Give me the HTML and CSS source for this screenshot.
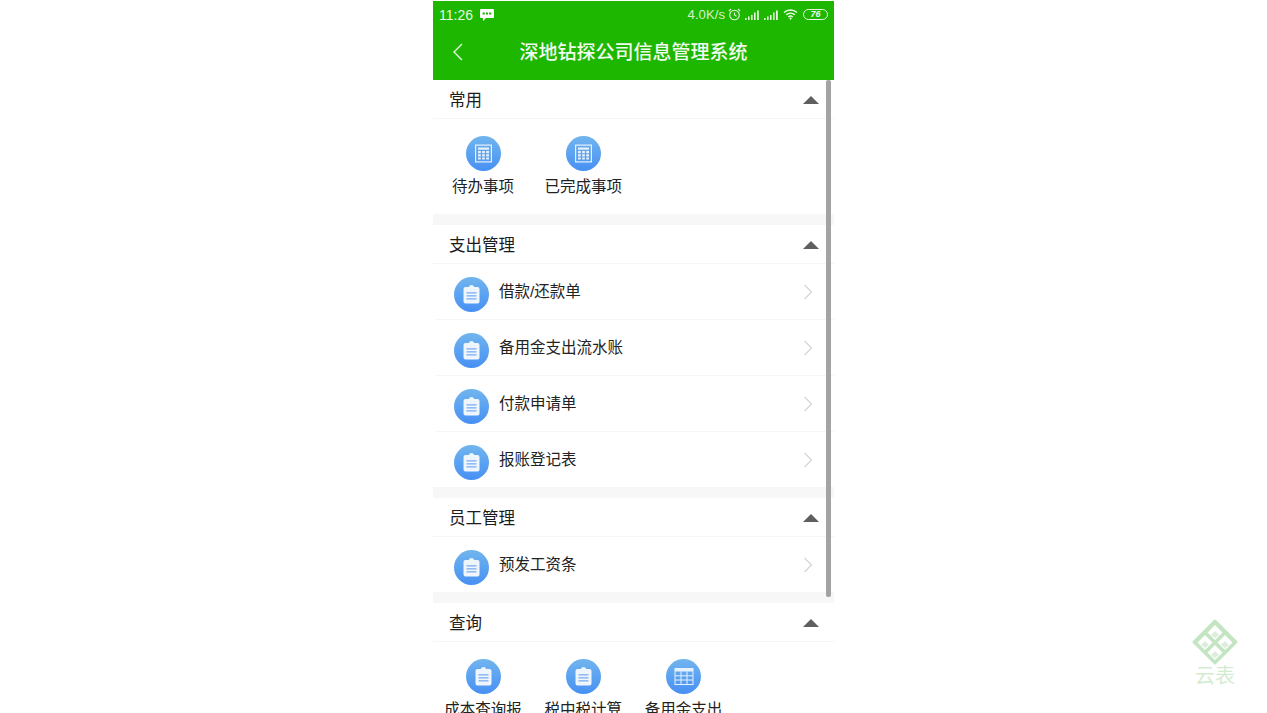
FILE: index.html
```html
<!DOCTYPE html>
<html lang="zh-CN">
<head>
    <meta charset="UTF-8">
    <meta name="viewport" content="width=device-width, initial-scale=1.0">
    <title>深地钻探公司信息管理系统</title>
    <link rel="stylesheet" href="styles.css">
</head>
<body>
    <svg class="defs" width="0" height="0">
        <defs>
            <linearGradient id="blue" x1="0" y1="0" x2="0" y2="1">
                <stop offset="0" stop-color="#71b5ee"/>
                <stop offset="1" stop-color="#4790f3"/>
            </linearGradient>
            <symbol id="ico-calc" viewBox="0 0 35 35">
                <circle cx="17.5" cy="17.5" r="17.5" fill="url(#blue)"/>
                <rect x="9.6" y="9.1" width="15.8" height="16.8" fill="none" stroke="#e6f1fc" stroke-width="1.2"/>
                <rect x="12" y="11.5" width="11" height="2.2" fill="#e6f1fc"/>
                <path d="M12 15h2.8v2.2H12zM16.1 15h2.8v2.2h-2.8zM20.2 15H23v2.2h-2.8zM12 18.2h2.8v2.2H12zM16.1 18.2h2.8v2.2h-2.8zM20.2 18.2H23v2.2h-2.8zM12 21.4h2.8v2.2H12zM16.1 21.4h2.8v2.2h-2.8zM20.2 21.4H23v2.2h-2.8z" fill="#e6f1fc"/>
            </symbol>
            <symbol id="ico-clip" viewBox="0 0 35 35">
                <circle cx="17.5" cy="17.5" r="17.5" fill="url(#blue)"/>
                <path d="M11.5 10h3.2a3 3 0 0 1 5.6 0h3.2a2 2 0 0 1 2 2v12.5a2 2 0 0 1-2 2h-12a2 2 0 0 1-2-2V12a2 2 0 0 1 2-2z" fill="#eef5fd"/>
                <rect x="12.5" y="15.2" width="10" height="1.3" fill="#7db0ef"/>
                <rect x="12.5" y="18.2" width="10" height="1.3" fill="#7db0ef"/>
                <rect x="12.5" y="21.2" width="10" height="1.3" fill="#7db0ef"/>
            </symbol>
            <symbol id="ico-table" viewBox="0 0 35 35">
                <circle cx="17.5" cy="17.5" r="17.5" fill="url(#blue)"/>
                <rect x="9" y="9.5" width="18" height="16" fill="none" stroke="#e6f1fc" stroke-width="1"/>
                <rect x="9" y="9.5" width="18" height="3" fill="#e6f1fc"/>
                <path d="M15 12.5v13M21 12.5v13M9 16.8h18M9 21h18" stroke="#e6f1fc" stroke-width="1" fill="none"/>
            </symbol>
            <symbol id="ico-more" viewBox="0 0 10 16">
                <path d="M1.5 1l7 7-7 7" fill="none" stroke="#d4d4d4" stroke-width="1.2"/>
            </symbol>
            <symbol id="ico-signal" viewBox="0 0 15 10">
                <path d="M0 8h1.6v2H0zM3 6.6h1.6V10H3zM6 5h1.6v5H6zM9 2.6h1.6V10H9zM12 .4h1.8V10H12z" fill="#e3f5de"/>
            </symbol>
        </defs>
    </svg>

    <div class="phone">
        <header class="appbar">
            <div class="statusbar">
                <div class="status-left">
                    <span>11:26</span>
                    <svg class="msg-icon" width="14" height="12" viewBox="0 0 14 12">
                        <path d="M1 0h12a1 1 0 0 1 1 1v7a1 1 0 0 1-1 1H6l-3 3V9H1a1 1 0 0 1-1-1V1a1 1 0 0 1 1-1z" fill="#fff"/>
                        <path d="M2.6 3.4h2.2v2.2H2.6zM5.9 3.4h2.2v2.2H5.9zM9.2 3.4h2.2v2.2H9.2z" fill="#1db700"/>
                    </svg>
                </div>
                <div class="status-right">
                    <span class="speed">4.0K/s</span>
                    <svg width="13" height="13" viewBox="0 0 13 13">
                        <circle cx="6.5" cy="7" r="4.8" fill="none" stroke="#e3f5de" stroke-width="1.1"/>
                        <path d="M6.5 4.4V7l2 1.3M.8 3.2L3 1M12.2 3.2L10 1" fill="none" stroke="#e3f5de" stroke-width="1.1"/>
                    </svg>
                    <svg width="15" height="10"><use href="#ico-signal"/></svg>
                    <svg width="15" height="10"><use href="#ico-signal"/></svg>
                    <svg width="15" height="11" viewBox="0 0 15 11">
                        <path d="M1 3.5a9.5 9.5 0 0 1 13 0M3.2 5.8a6.3 6.3 0 0 1 8.6 0M5.3 8a3.2 3.2 0 0 1 4.4 0" fill="none" stroke="#f0faed" stroke-width="1.4"/>
                        <circle cx="7.5" cy="9.6" r="1.1" fill="#f0faed"/>
                    </svg>
                    <span class="battery"><span class="battery-num">76</span></span>
                </div>
            </div>
            <div class="titlebar">
                <svg class="back" width="11" height="18" viewBox="0 0 11 18">
                    <path d="M10 1L2 9l8 8" fill="none" stroke="#e8f7e4" stroke-width="1.4"/>
                </svg>
                <h1>深地钻探公司信息管理系统</h1>
            </div>
        </header>

        <main class="content">
            <section class="group">
                <div class="group-head">
                    <h2>常用</h2>
                    <span class="arrow-up"></span>
                </div>
                <div class="grid grid-short">
                    <div class="grid-item">
                        <svg class="icon"><use href="#ico-calc"/></svg>
                        <span>待办事项</span>
                    </div>
                    <div class="grid-item">
                        <svg class="icon"><use href="#ico-calc"/></svg>
                        <span>已完成事项</span>
                    </div>
                </div>
            </section>

            <section class="group">
                <div class="group-head">
                    <h2>支出管理</h2>
                    <span class="arrow-up"></span>
                </div>
                <div class="row">
                    <svg class="icon"><use href="#ico-clip"/></svg>
                    <span class="row-text">借款/还款单</span>
                    <svg class="more"><use href="#ico-more"/></svg>
                </div>
                <div class="row">
                    <svg class="icon"><use href="#ico-clip"/></svg>
                    <span class="row-text">备用金支出流水账</span>
                    <svg class="more"><use href="#ico-more"/></svg>
                </div>
                <div class="row">
                    <svg class="icon"><use href="#ico-clip"/></svg>
                    <span class="row-text">付款申请单</span>
                    <svg class="more"><use href="#ico-more"/></svg>
                </div>
                <div class="row row-last">
                    <svg class="icon"><use href="#ico-clip"/></svg>
                    <span class="row-text">报账登记表</span>
                    <svg class="more"><use href="#ico-more"/></svg>
                </div>
            </section>

            <section class="group">
                <div class="group-head">
                    <h2>员工管理</h2>
                    <span class="arrow-up"></span>
                </div>
                <div class="row row-last">
                    <svg class="icon"><use href="#ico-clip"/></svg>
                    <span class="row-text">预发工资条</span>
                    <svg class="more"><use href="#ico-more"/></svg>
                </div>
            </section>

            <section class="group">
                <div class="group-head">
                    <h2>查询</h2>
                    <span class="arrow-up"></span>
                </div>
                <div class="grid">
                    <div class="grid-item">
                        <svg class="icon"><use href="#ico-clip"/></svg>
                        <span>成本查询报</span>
                    </div>
                    <div class="grid-item">
                        <svg class="icon"><use href="#ico-clip"/></svg>
                        <span>税中税计算</span>
                    </div>
                    <div class="grid-item">
                        <svg class="icon"><use href="#ico-table"/></svg>
                        <span>备用金支出</span>
                    </div>
                </div>
            </section>
        </main>

        <div class="scrollbar"></div>
    </div>

    <div class="watermark">
        <svg width="46" height="46" viewBox="0 0 46 46">
            <path d="M23 2l21 21-21 21L2 23z" fill="#c4e5c2" stroke="#c4e5c2" stroke-width="3" stroke-linejoin="round"/>
            <path d="M23 6l7.5 7.5L23 21l-7.5-7.5zM13 16l7.5 7.5L13 31l-7.5-7.5zM33 16l7.5 7.5L33 31l-7.5-7.5zM23 26l7.5 7.5L23 41l-7.5-7.5z" fill="#fff"/>
            <path d="M23 12l4 4-4 3-4-3zM13 22l4 4-4 3-4-3zM33 22l4 4-4 3-4-3zM23 32l4 4-4 3-4-3z" fill="#dceedb"/>
        </svg>
        <span>云表</span>
    </div>
</body>
</html>
```

FILE: styles.css
```css
html, body {
    height: 100%;
}
body {
    margin: 0;
    background-color: #fff;
    font-family: "Liberation Sans", "Noto Sans CJK SC", sans-serif;
    overflow: hidden;
}
.defs {
    position: absolute;
}
.phone {
    position: relative;
    width: 401px;
    height: 713px;
    margin: 0 auto;
    overflow: hidden;
    background-color: #fff;
}

/* top green bar */
.appbar {
    height: 79px;
    margin-top: 1px;
    background-color: #1db700;
    color: #fff;
}
.statusbar {
    display: flex;
    justify-content: space-between;
    align-items: center;
    height: 27px;
    padding: 0 6px;
    font-size: 14px;
}
.status-left {
    display: flex;
    align-items: center;
    gap: 7px;
    color: #e9f8e5;
}
.msg-icon {
    margin-top: 1px;
}
.status-right {
    display: flex;
    align-items: center;
    gap: 4px;
    color: #d6f0d0;
    font-size: 13.2px;
}
.speed {
    margin-right: -1px;
}
.battery {
    display: flex;
    align-items: center;
    justify-content: center;
    width: 23px;
    height: 9px;
    margin-left: 1px;
    border: 1px solid #e6f7e2;
    border-radius: 6px;
}
.battery-num {
    font-size: 9px;
    font-style: italic;
    font-weight: bold;
    line-height: 9px;
    color: #f0faed;
}
.titlebar {
    position: relative;
    display: flex;
    align-items: center;
    justify-content: center;
    height: 48px;
    padding-bottom: 4px;
    box-sizing: border-box;
}
.back {
    position: absolute;
    left: 19px;
    top: 15px;
}
.titlebar h1 {
    margin: 0;
    font-size: 19px;
    font-weight: 500;
    color: #f2fbf0;
}

/* list */
.group {
    border-bottom: 11px solid #f7f7f7;
    background-color: #fff;
}
.group-head {
    display: flex;
    align-items: center;
    justify-content: space-between;
    height: 38px;
    padding: 0 15px 0 16px;
    border-bottom: 1px solid #f5f5f5;
}
.group-head h2 {
    margin: 0;
    font-size: 16.5px;
    font-weight: 400;
    color: #1c1c1c;
}
.arrow-up {
    width: 0;
    height: 0;
    margin-top: 2px;
    border-left: 8px solid transparent;
    border-right: 8px solid transparent;
    border-bottom: 8px solid #5f5f5f;
}
.row {
    display: flex;
    align-items: center;
    height: 55px;
    margin-left: 3px;
    padding: 0 21px 0 18px;
    border-bottom: 1px solid #f6f6f6;
}
.row-last {
    border-bottom: none;
}
.row .icon {
    margin-top: 6px;
}
.row-text {
    flex: 1;
    margin-left: 10px;
    margin-bottom: 3px;
    font-size: 15.5px;
    color: #222;
}
.icon {
    display: block;
    flex: none;
    width: 35px;
    height: 35px;
}
.more {
    flex: none;
    width: 10px;
    height: 16px;
}
.grid {
    display: grid;
    grid-template-columns: repeat(4, 1fr);
    padding-top: 17px;
}
.grid-short {
    height: 78px;
}
.grid-item {
    display: flex;
    flex-direction: column;
    align-items: center;
    gap: 6px;
    font-size: 15.5px;
    line-height: 20px;
    color: #222;
    white-space: nowrap;
}

/* page scrollbar over the list */
.scrollbar {
    position: absolute;
    top: 80px;
    left: 393px;
    width: 5px;
    height: 517px;
    background-color: #a3a3a3;
    border-radius: 2px;
}

.watermark {
    position: absolute;
    left: 1192px;
    top: 619px;
    display: flex;
    flex-direction: column;
    align-items: center;
    width: 46px;
}
.watermark span {
    font-size: 20px;
    line-height: 22px;
    color: #d3ecd1;
}
```
